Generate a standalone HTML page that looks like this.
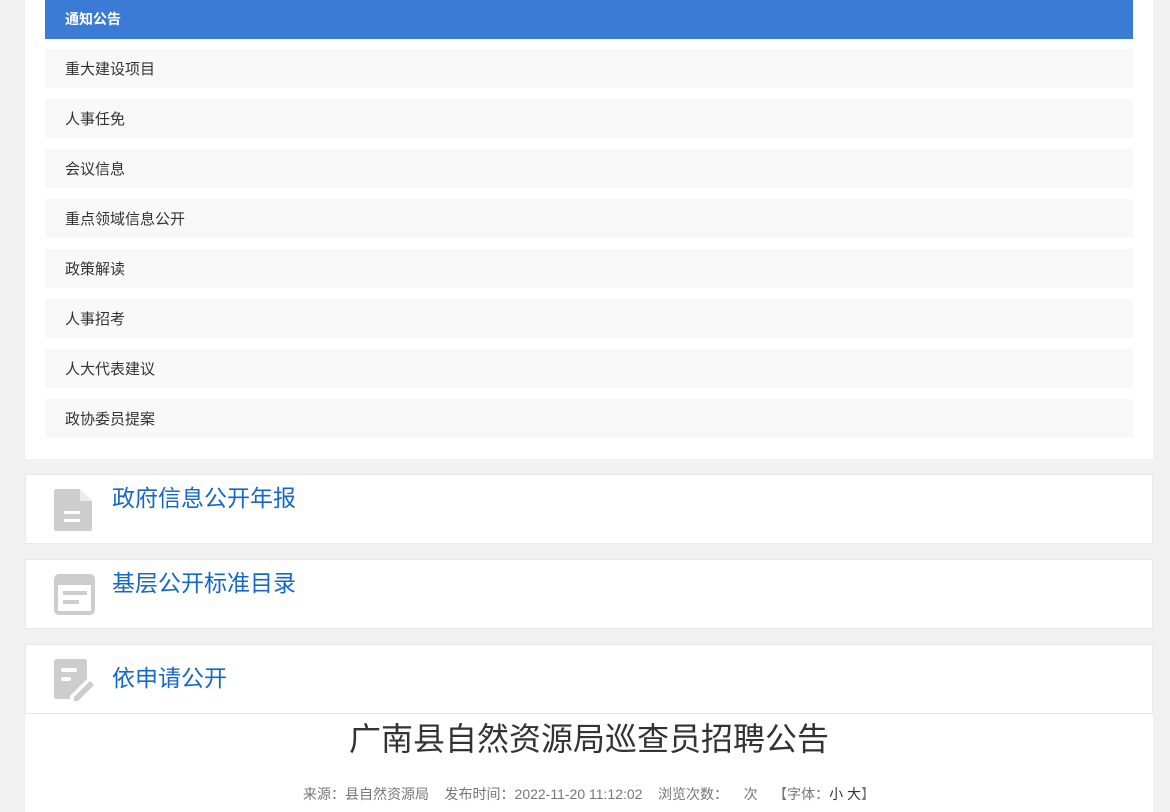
<!DOCTYPE html>
<html><head><meta charset="utf-8"><style>
*{margin:0;padding:0;box-sizing:border-box}
body{width:1170px;height:812px;overflow:hidden;background:#f1f1f1;font-family:"Liberation Sans","Noto Sans CJK SC",sans-serif;position:relative}
.panel{position:absolute;left:25px;top:0;width:1128px;height:459px;background:#fff}
.item{position:absolute;left:20px;width:1088px;height:39px;background:#f8f8f8;font-size:15px;color:#333;line-height:41px;padding-left:20px}
.item.on{background:#3c7bd5;color:#fff;font-weight:bold;font-size:14px;line-height:38px}
.box{position:absolute;left:25px;width:1128px;height:70px;background:#fff;border:1px solid #e8e8e8}
.box .t{position:absolute;left:86px;top:4px;font-size:23px;color:#1567c9}
.box svg{position:absolute;left:28px}
.art{position:absolute;left:25px;top:714px;width:1128px;height:98px;background:#fff}
.art h1{font-weight:normal;text-align:center;font-size:32px;color:#333;margin-top:5px;line-height:40px}
.meta{text-align:center;font-size:14px;color:#777;margin-top:25px}
</style></head><body>
<div class="panel">
<div class="item on" style="top:0">通知公告</div>
<div class="item" style="top:49px">重大建设项目</div>
<div class="item" style="top:99px">人事任免</div>
<div class="item" style="top:149px">会议信息</div>
<div class="item" style="top:199px">重点领域信息公开</div>
<div class="item" style="top:249px">政策解读</div>
<div class="item" style="top:299px">人事招考</div>
<div class="item" style="top:349px">人大代表建议</div>
<div class="item" style="top:399px">政协委员提案</div>
</div>
<div class="box" style="top:474px"><svg style="top:14px" width="40" height="42" viewBox="0 0 40 42"><path d="M2 0H26L38 12V40Q38 42 36 42H2Q0 42 0 40V2Q0 0 2 0Z" fill="#cdcdcd"/><path d="M26 0V12H38" fill="#fff" opacity=".6"/><rect x="10" y="22" width="16" height="3" fill="#fff"/><rect x="10" y="30" width="16" height="3" fill="#fff"/></svg><div class="t">政府信息公开年报</div></div>
<div class="box" style="top:559px"><svg style="top:14px" width="42" height="42" viewBox="0 0 42 42"><rect x="2" y="2" width="37" height="37" rx="3" fill="none" stroke="#cdcdcd" stroke-width="4"/><rect x="2" y="2" width="37" height="9" fill="#cdcdcd"/><rect x="9" y="17" width="24" height="4" fill="#cdcdcd"/><rect x="9" y="26" width="16" height="4" fill="#cdcdcd"/></svg><div class="t">基层公开标准目录</div></div>
<div class="box" style="top:644px"><svg style="top:14px" width="42" height="42" viewBox="0 0 42 42"><path d="M3 0H30Q33 0 33 3V20L16 37V40H3Q0 40 0 37V3Q0 0 3 0Z" fill="#cdcdcd"/><rect x="7" y="9" width="16" height="4" rx="2" fill="#fff"/><rect x="7" y="18" width="10" height="4" rx="2" fill="#fff"/><path d="M20 38L36 22L40 26L24 42H20Z" fill="#cdcdcd"/></svg><div class="t" style="top:14px">依申请公开</div></div>
<div class="art"><h1>广南县自然资源局巡查员招聘公告</h1>
<div class="meta">来源：县自然资源局&nbsp;&nbsp;&nbsp; 发布时间：2022-11-20 11:12:02&nbsp;&nbsp;&nbsp; 浏览次数：&nbsp;&nbsp;&nbsp; 次&nbsp;&nbsp;&nbsp; 【字体：<span style="color:#333">小 大</span>】</div></div>
</body></html>
